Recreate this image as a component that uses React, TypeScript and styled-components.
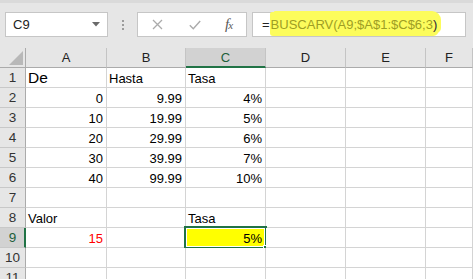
import React from "react";
import styled, { createGlobalStyle } from "styled-components";

const GlobalStyle = createGlobalStyle`
  html, body {
    margin: 0;
    padding: 0;
    background: #ffffff;
    overflow: hidden;
  }
  * {
    box-sizing: border-box;
  }
`;

const GREEN = "#217346";
const GRID = "#d4d4d4";
const HEAD_LINE = "#ababab";

const Page = styled.div`
  width: 473px;
  height: 279px;
  overflow: hidden;
  font-family: "Liberation Sans", Arial, sans-serif;
  background: #ffffff;
`;

const Toolbar = styled.div`
  height: 48px;
  background: #e6e6e6;
  border-top: 3px solid #dadada;
  padding: 9px 7px 0 5px;
  display: flex;
  align-items: flex-start;
`;

const NameBox = styled.div`
  width: 103px;
  height: 25px;
  background: #ffffff;
  border: 1px solid #c6c6c6;
  display: flex;
  align-items: center;
  justify-content: space-between;
  padding: 0 7px 0 7px;
  font-size: 13px;
  color: #222222;
`;

const Dots = styled.div`
  width: 29px;
  height: 25px;
  display: flex;
  flex-direction: column;
  align-items: center;
  justify-content: center;
  gap: 2px;

  span {
    width: 2px;
    height: 2px;
    background: #9c9c9c;
  }
`;

const FxBox = styled.div`
  width: 110px;
  height: 25px;
  background: #ffffff;
  border: 1px solid #c6c6c6;
  display: flex;
  align-items: center;
  padding-left: 14px;
`;

const IconSlot = styled.div<{ $w: number }>`
  width: ${(p) => p.$w}px;
  display: flex;
  align-items: center;
  justify-content: flex-start;
`;

const FxText = styled.span`
  font-family: "Liberation Serif", "Times New Roman", serif;
  font-style: italic;
  font-size: 15px;
  color: #595959;
  letter-spacing: -1px;

  small {
    font-size: 11px;
  }
`;

const FormulaInput = styled.div`
  flex: 1;
  margin-left: 5px;
  height: 25px;
  background: #ffffff;
  border: 1px solid #c6c6c6;
  display: flex;
  align-items: center;
  padding-left: 9px;
  font-size: 13px;
  color: #222222;
  white-space: nowrap;
  overflow: visible;
`;

const Marker = styled.span`
  display: inline-block;
  background: #fcfc5c;
  line-height: 15px;
  padding: 5px 2px 4px 1px;
  margin-top: -1px;
  border-radius: 2px 10px 6px 3px;
  color: #9e9e24;
  box-shadow: 3px -2px 0 -1px #fcfc5c;
`;

const Paren = styled.span`
  color: #1f1f3a;
`;

const Sheet = styled.div`
  display: grid;
  grid-template-columns: 26px 81px 79px 80px 80px 80px 1fr;
  grid-auto-rows: 20px;
`;

const Corner = styled.div`
  background: #e6e6e6;
  border-right: 1px solid ${HEAD_LINE};
  border-bottom: 1px solid ${HEAD_LINE};
  display: flex;
  align-items: flex-end;
  justify-content: flex-end;
  padding: 0 2px 2px 0;
`;

const ColHead = styled.div<{ $active?: boolean }>`
  background: ${(p) => (p.$active ? "#d2d2d2" : "#e6e6e6")};
  border-right: 1px solid #c4c4c4;
  border-bottom: ${(p) => (p.$active ? `2px solid ${GREEN}` : `1px solid ${HEAD_LINE}`)};
  display: flex;
  align-items: center;
  justify-content: center;
  font-size: 13px;
  color: ${(p) => (p.$active ? "#1d5e3a" : "#222222")};
  padding-top: ${(p) => (p.$active ? "1px" : "0")};
`;

const RowHead = styled.div<{ $active?: boolean }>`
  background: ${(p) => (p.$active ? "#d2d2d2" : "#e6e6e6")};
  border-right: ${(p) => (p.$active ? `2px solid ${GREEN}` : `1px solid ${HEAD_LINE}`)};
  border-bottom: 1px solid #c8c8c8;
  display: flex;
  align-items: center;
  justify-content: center;
  font-size: 13.5px;
  color: ${(p) => (p.$active ? "#1d5e3a" : "#333333")};
  padding-left: ${(p) => (p.$active ? "1px" : "0")};
`;

const Cell = styled.div<{ $align?: "left" | "right"; $big?: boolean; $red?: boolean; $fill?: string }>`
  position: relative;
  border-right: 1px solid ${GRID};
  border-bottom: 1px solid ${GRID};
  background: ${(p) => p.$fill || "#ffffff"};
  display: flex;
  align-items: flex-end;
  justify-content: ${(p) => (p.$align === "right" ? "flex-end" : "flex-start")};
  padding: 0 ${(p) => (p.$align === "right" ? "3px" : "2px")} 0 2px;
  font-size: ${(p) => (p.$big ? "15.5px" : "13px")};
  line-height: ${(p) => (p.$big ? "18px" : "16px")};
  color: ${(p) => (p.$red ? "#ff0000" : "#000000")};
  white-space: nowrap;
`;

const Selection = styled.div`
  position: absolute;
  top: -2px;
  left: -2px;
  right: -2px;
  bottom: -2px;
  border: 2px solid ${GREEN};
  box-shadow: inset 0 0 0 1px #ffffff;
  pointer-events: none;
`;

const FillHandle = styled.div`
  position: absolute;
  right: -5px;
  bottom: -5px;
  width: 7px;
  height: 7px;
  background: ${GREEN};
  border: 1px solid #ffffff;
`;

type CellData = {
  v: string;
  align?: "left" | "right";
  big?: boolean;
  red?: boolean;
  selected?: boolean;
};

const rows: CellData[][] = [
  [{ v: "De", big: true }, { v: "Hasta" }, { v: "Tasa" }],
  [{ v: "0", align: "right" }, { v: "9.99", align: "right" }, { v: "4%", align: "right" }],
  [{ v: "10", align: "right" }, { v: "19.99", align: "right" }, { v: "5%", align: "right" }],
  [{ v: "20", align: "right" }, { v: "29.99", align: "right" }, { v: "6%", align: "right" }],
  [{ v: "30", align: "right" }, { v: "39.99", align: "right" }, { v: "7%", align: "right" }],
  [{ v: "40", align: "right" }, { v: "99.99", align: "right" }, { v: "10%", align: "right" }],
  [],
  [{ v: "Valor" }, { v: "" }, { v: "Tasa" }],
  [{ v: "15", align: "right", red: true }, { v: "" }, { v: "5%", align: "right", selected: true }],
  [],
  [],
];

const columns = ["A", "B", "C", "D", "E", "F"];

export default function App() {
  return (
    <Page>
      <GlobalStyle />
      <Toolbar>
        <NameBox>
          <span>C9</span>
          <svg width="8" height="5" viewBox="0 0 8 5">
            <polygon points="0,0 8,0 4,4.5" fill="#6a6a6a" />
          </svg>
        </NameBox>
        <Dots>
          <span />
          <span />
          <span />
        </Dots>
        <FxBox>
          <IconSlot $w={37}>
            <svg width="11" height="11" viewBox="0 0 11 11">
              <path d="M1 1 L10 10 M10 1 L1 10" stroke="#ababab" strokeWidth="1.3" fill="none" />
            </svg>
          </IconSlot>
          <IconSlot $w={36}>
            <svg width="12" height="10" viewBox="0 0 12 10">
              <path d="M0.8 5.2 L4.3 8.8 L11.2 1" stroke="#ababab" strokeWidth="1.4" fill="none" />
            </svg>
          </IconSlot>
          <IconSlot $w={20}>
            <FxText>
              f<small>x</small>
            </FxText>
          </IconSlot>
        </FxBox>
        <FormulaInput>
          <span>=</span>
          <Marker>
            BUSCARV(A9;$A$1:$C$6;3<Paren>)</Paren>
          </Marker>
        </FormulaInput>
      </Toolbar>

      <Sheet>
        <Corner>
          <svg width="14" height="14" viewBox="0 0 14 14">
            <polygon points="14,0 14,14 0,14" fill="#b8b8b8" />
          </svg>
        </Corner>
        {columns.map((c) => (
          <ColHead key={c} $active={c === "C"}>
            {c}
          </ColHead>
        ))}

        {rows.map((row, r) => (
          <React.Fragment key={r}>
            <RowHead $active={r === 8}>{r + 1}</RowHead>
            {columns.map((c, ci) => {
              const cell = row[ci];
              return (
                <Cell
                  key={c}
                  $align={cell?.align}
                  $big={cell?.big}
                  $red={cell?.red}
                  $fill={cell?.selected ? "#ffff00" : undefined}
                >
                  {cell?.v}
                  {cell?.selected && (
                    <Selection>
                      <FillHandle />
                    </Selection>
                  )}
                </Cell>
              );
            })}
          </React.Fragment>
        ))}
      </Sheet>
    </Page>
  );
}
